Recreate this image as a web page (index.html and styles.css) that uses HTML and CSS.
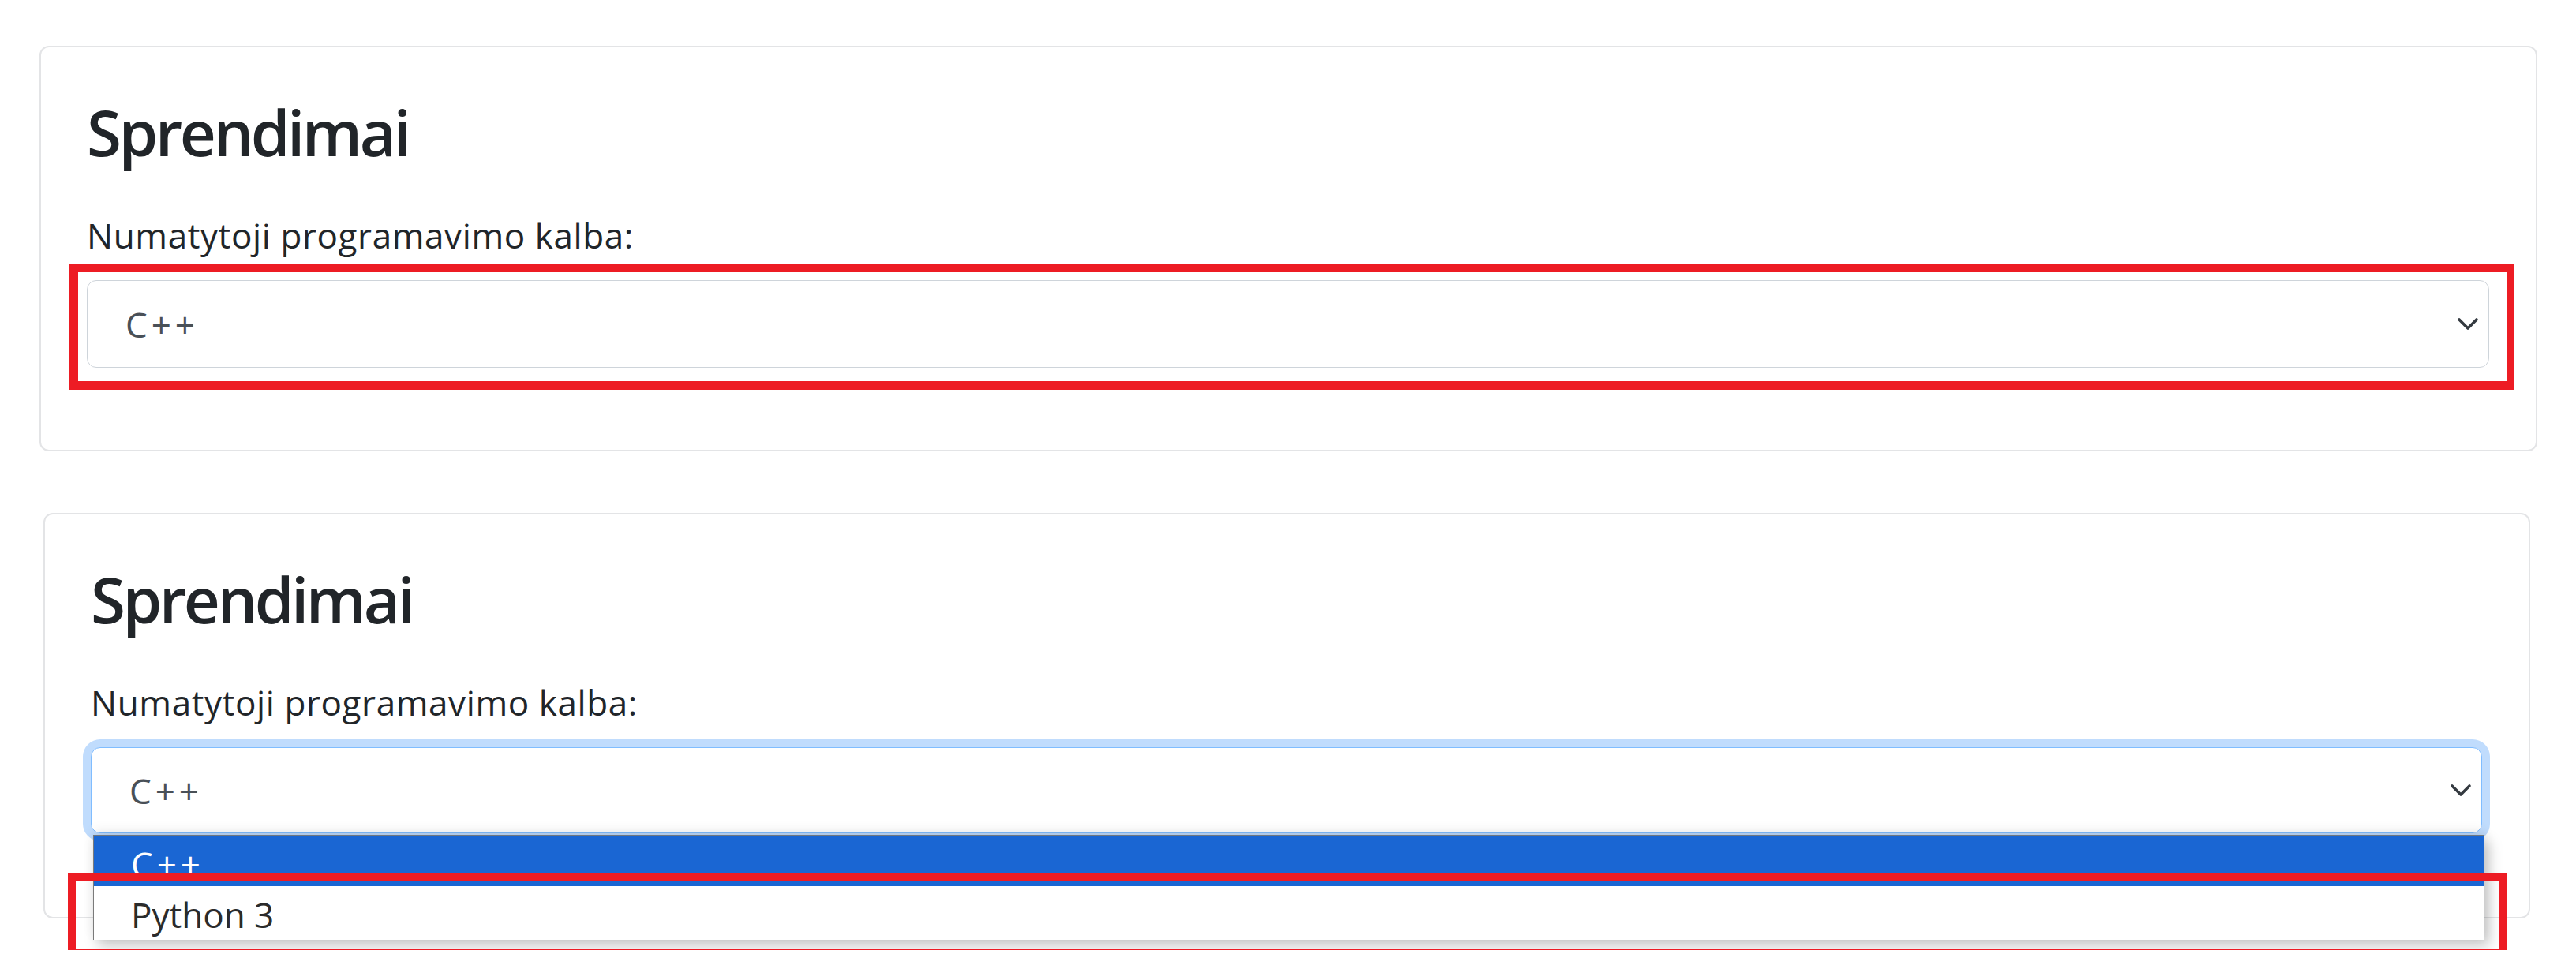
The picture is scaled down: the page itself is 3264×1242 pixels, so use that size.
FILE: index.html
```html
<!DOCTYPE html>
<html lang="lt">
<head>
<meta charset="utf-8">
<title>Sprendimai</title>
<link rel="stylesheet" href="styles.css">
</head>
<body>
<main class="page">
  <section class="card card-first">
    <h1 class="card-title">Sprendimai</h1>
    <label class="field-label">Numatytoji programavimo kalba:</label>
    <div class="select">
      <span class="select-value">C++</span>
      <svg class="chevron" width="30" height="20" viewBox="0 0 30 20"><path d="M4 4 L15 15 L26 4"/></svg>
    </div>
  </section>

  <section class="card card-second">
    <h1 class="card-title">Sprendimai</h1>
    <label class="field-label">Numatytoji programavimo kalba:</label>
    <div class="select select-focus">
      <span class="select-value">C++</span>
      <svg class="chevron" width="30" height="20" viewBox="0 0 30 20"><path d="M4 4 L15 15 L26 4"/></svg>
      <ul class="dropdown">
        <li class="option option-active"><span class="cpp">C++</span></li>
        <li class="option option-plain">Python 3</li>
      </ul>
    </div>
  </section>

  <div class="mark mark-one"></div>
  <div class="mark mark-two"></div>
</main>
</body>
</html>
```

FILE: styles.css
```css
html, body {
  margin: 0;
  background: #ffffff;
}

body {
  font-family: "Open Sans", "Noto Sans", sans-serif;
  color: #212529;
}

.page {
  position: relative;
  padding-top: 58px;
  padding-bottom: 40px;
}

.card {
  box-sizing: border-box;
  border: 2px solid #e3e4e6;
  border-radius: 12px;
  background: #ffffff;
  padding: 59px 59px 104px 58px;
}

.card-first {
  margin-left: 50px;
  width: 3165px;
}

.card-second {
  margin: 78px 0 0 55px;
  width: 3151px;
  padding-bottom: 106px;
}

.card-title {
  margin: 0 0 52px 0;
  font-size: 80px;
  line-height: 96px;
  font-weight: 600;
  letter-spacing: -3.5px;
  color: #212529;
}

.field-label {
  display: block;
  margin-bottom: 25px;
  font-size: 44px;
  line-height: 63px;
  font-weight: 400;
  letter-spacing: 0.6px;
  color: #212529;
}

.select {
  position: relative;
  box-sizing: border-box;
  height: 111px;
  display: flex;
  align-items: center;
  justify-content: space-between;
  padding: 0 11px 0 48px;
  border: 1px solid #ced4da;
  border-radius: 12px;
  background: #ffffff;
  font-size: 44px;
  line-height: 1.5;
  color: #495057;
}

.select-value {
  letter-spacing: 5px;
}

.select-focus {
  height: 109px;
  border-color: #80bdff;
  box-shadow: 0 0 0 10px #c0dcfd;
}

.chevron {
  flex: none;
  fill: none;
  stroke: #343a40;
  stroke-width: 3.6;
  stroke-linecap: round;
  stroke-linejoin: round;
}

.dropdown {
  position: absolute;
  left: 2px;
  top: calc(100% + 3px);
  width: 3029px;
  margin: 0;
  padding: 0;
  list-style: none;
  background: #ffffff;
  border-left: 1px solid #7a7a7a;
  border-top: 1px solid #6f7780;
  box-shadow: 6px 8px 16px rgba(0, 0, 0, 0.22), 0 -6px 14px rgba(0, 0, 0, 0.07);
  z-index: 2;
}

.option {
  box-sizing: border-box;
  padding: 10px 0 0 47px;
  font-size: 44px;
  line-height: 52px;
  overflow: hidden;
}

.cpp {
  letter-spacing: 5px;
}

.option-active {
  height: 64px;
  background: #1a66d3;
  color: #ffffff;
}

.option-plain {
  height: 68px;
  color: #2b2b2b;
}

.mark {
  position: absolute;
  box-sizing: border-box;
  border: 10px solid #ed1c24;
  z-index: 3;
}

.mark-one {
  left: 88px;
  top: 335px;
  width: 3098px;
  height: 159px;
  border-width: 10px 10px 11px 11px;
}

.mark-two {
  left: 86px;
  top: 1107px;
  width: 3090px;
  height: 106px;
}
```
